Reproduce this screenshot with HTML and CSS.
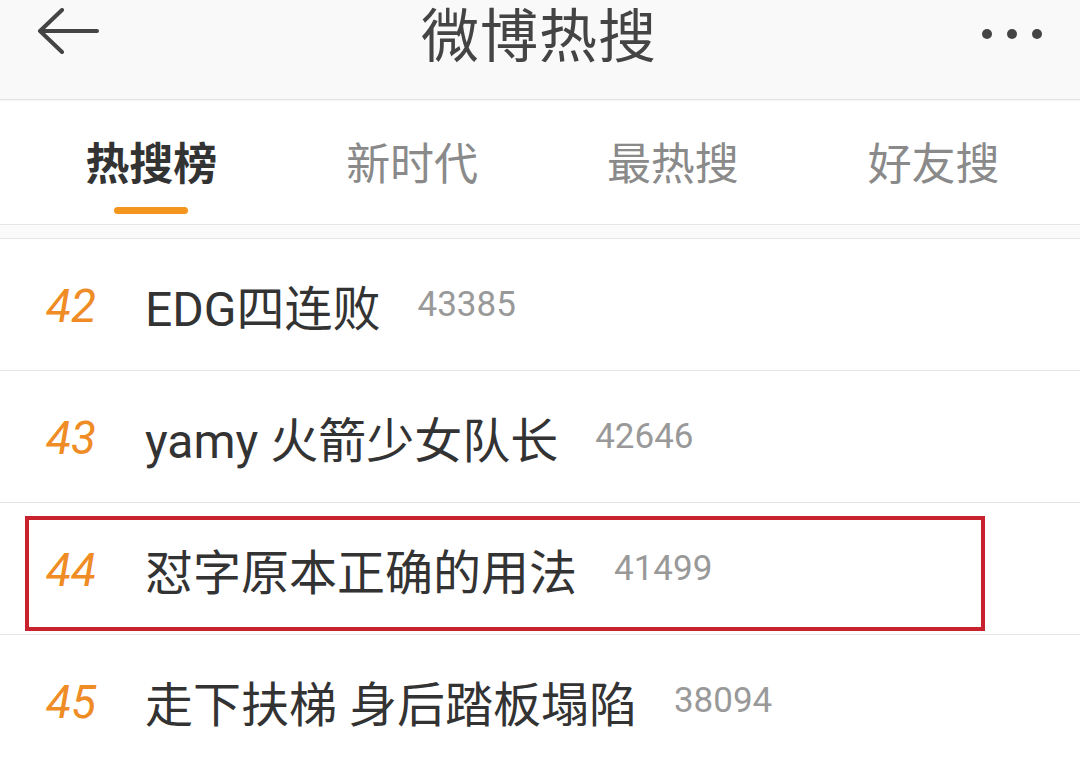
FILE: index.html
```html
<!DOCTYPE html>
<html>
<head>
    <meta charset="utf-8">
    <title>微博热搜</title>
    <link rel="stylesheet" href="styles.css">
</head>
<body>
    <div class="page">
        <div class="header">
            <div class="back">
                <svg width="64" height="50" viewBox="0 0 64 50">
                    <path d="M61 23 H5 M26 2 L4 23 L26 44" fill="none" stroke="#444" stroke-width="4" stroke-linecap="round" stroke-linejoin="round"/>
                </svg>
            </div>
            <h1 class="title">微博热搜</h1>
            <div class="more">
                <span class="dot"></span>
                <span class="dot"></span>
                <span class="dot"></span>
            </div>
        </div>

        <div class="tabs">
            <div class="tab active">
                <span class="tab-label">热搜榜</span>
                <span class="tab-bar"></span>
            </div>
            <div class="tab">
                <span class="tab-label">新时代</span>
                <span class="tab-bar"></span>
            </div>
            <div class="tab">
                <span class="tab-label">最热搜</span>
                <span class="tab-bar"></span>
            </div>
            <div class="tab">
                <span class="tab-label">好友搜</span>
                <span class="tab-bar"></span>
            </div>
        </div>

        <div class="spacer"></div>

        <ul class="list">
            <li class="row">
                <span class="rank">42</span>
                <span class="topic">EDG四连败</span>
                <span class="count">43385</span>
            </li>
            <li class="row">
                <span class="rank">43</span>
                <span class="topic">yamy 火箭少女队长</span>
                <span class="count">42646</span>
            </li>
            <li class="row marked">
                <span class="rank">44</span>
                <span class="topic">怼字原本正确的用法</span>
                <span class="count">41499</span>
            </li>
            <li class="row">
                <span class="rank">45</span>
                <span class="topic">走下扶梯 身后踏板塌陷</span>
                <span class="count">38094</span>
            </li>
        </ul>
    </div>
</body>
</html>
```

FILE: styles.css
```css
body {
    margin: 0;
    background-color: #ffffff;
    font-family: Roboto, "Noto Sans CJK SC", sans-serif;
    overflow: hidden;
}

.page {
    width: 1080px;
    height: 758px;
    overflow: hidden;
}

.header {
    height: 74px;
    padding-bottom: 25px;
    background-color: #f9f9f9;
    border-bottom: 1px solid #e2e2e2;
    box-shadow: 0 1px 2px rgba(0, 0, 0, 0.04);
    display: flex;
    align-items: center;
    justify-content: space-between;
    padding-left: 36px;
    padding-right: 38px;
}

.back {
    width: 64px;
    height: 50px;
    margin-top: -8px;
}

.title {
    margin: 0;
    font-size: 58px;
    font-weight: normal;
    color: #444444;
    line-height: 74px;
    letter-spacing: 1px;
}

.more {
    width: 64px;
    display: flex;
    justify-content: flex-end;
    gap: 15px;
    margin-top: -6px;
}

.dot {
    width: 10px;
    height: 10px;
    border-radius: 50%;
    background-color: #444444;
}

.tabs {
    height: 124px;
    border-bottom: 1px solid #e6e6e6;
    display: grid;
    grid-template-columns: repeat(4, 1fr);
    padding: 0 16px 0 21px;
}

.tab {
    display: flex;
    flex-direction: column;
    align-items: center;
    padding-top: 35px;
}

.tab-label {
    font-size: 44px;
    line-height: 60px;
    color: #8a8a8a;
}

.tab.active .tab-label {
    color: #333333;
    font-weight: bold;
}

.tab-bar {
    width: 74px;
    height: 7px;
    margin-top: 12px;
    border-radius: 4px;
}

.tab.active .tab-bar {
    background-color: #f4961e;
}

.spacer {
    height: 13px;
    background-color: #fafafa;
}

.list {
    list-style: none;
    margin: 0;
    padding: 0;
    border-top: 1px solid #e6e6e6;
}

.row {
    position: relative;
    height: 131px;
    border-bottom: 1px solid #e4e4e4;
    display: flex;
    align-items: center;
    padding-left: 46px;
}

.rank {
    width: 99px;
    font-size: 46px;
    font-style: italic;
    color: #ef8c25;
    padding-top: 3px;
}

.topic {
    font-size: 48px;
    color: #333333;
}

.count {
    margin-left: 37px;
    font-size: 35px;
    color: #999999;
}

.row.marked::after {
    content: "";
    position: absolute;
    left: 25px;
    top: 13px;
    width: 952px;
    height: 107px;
    border: 4px solid #c8222f;
}
```
